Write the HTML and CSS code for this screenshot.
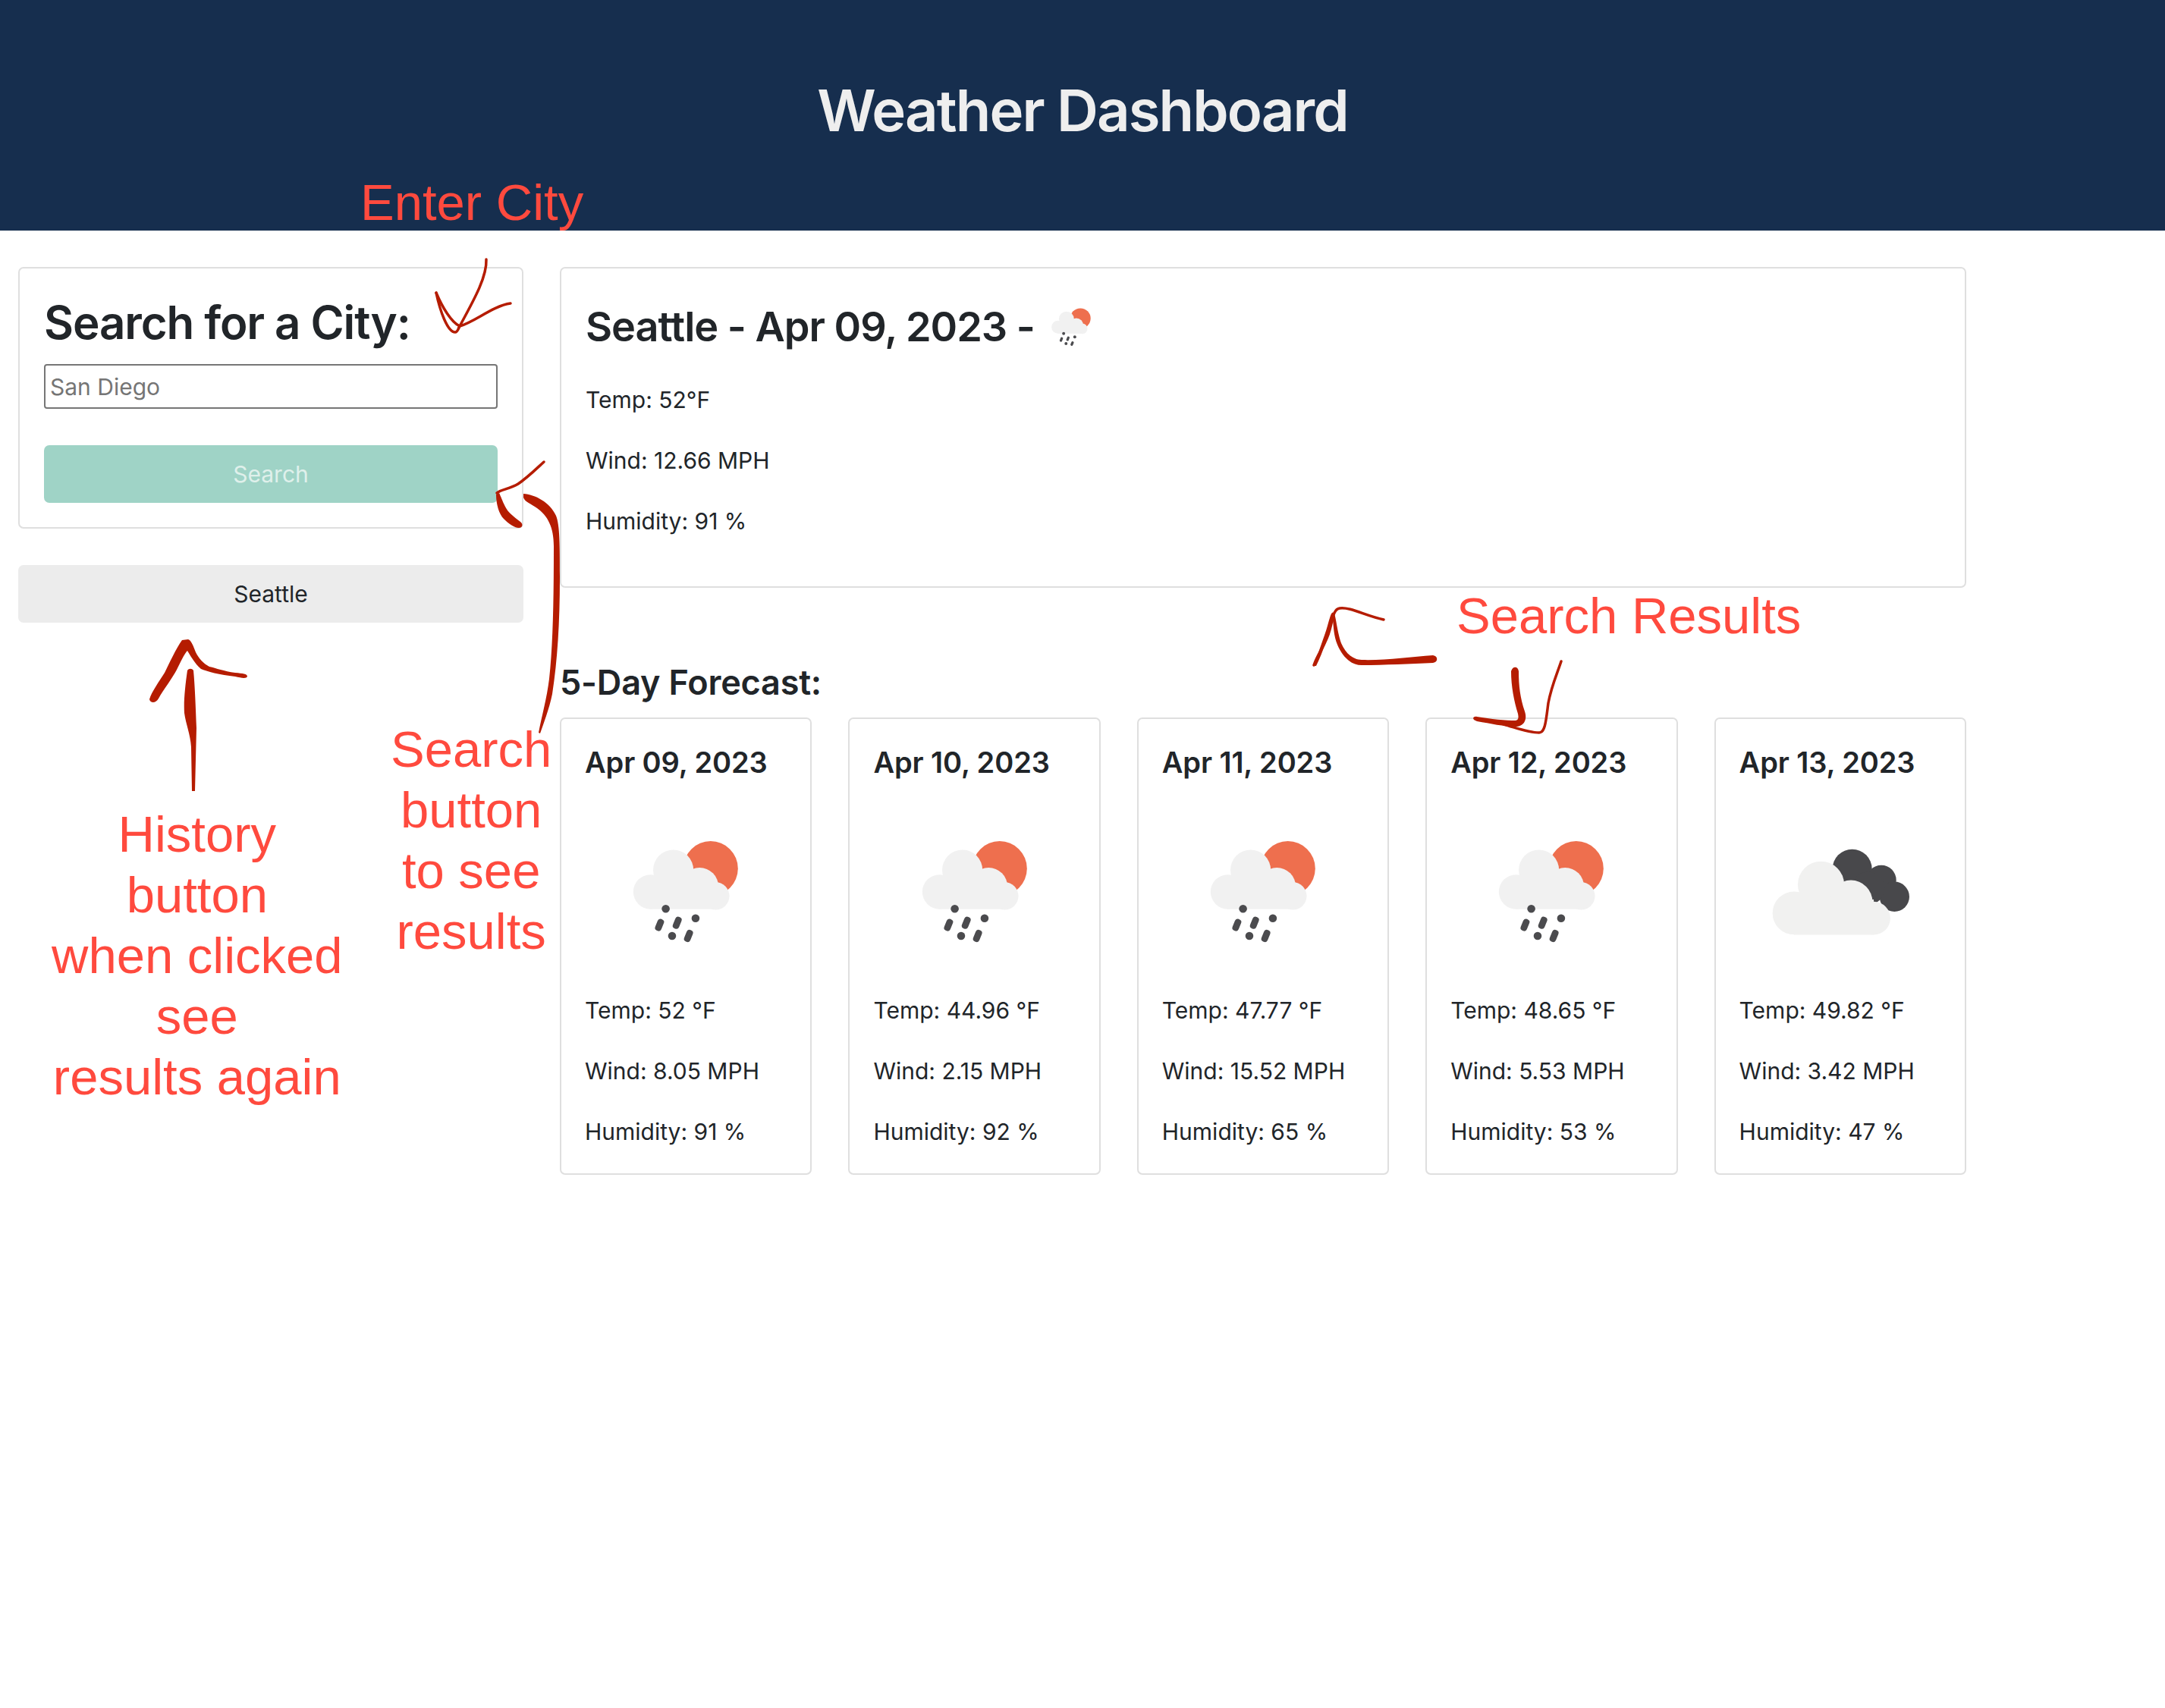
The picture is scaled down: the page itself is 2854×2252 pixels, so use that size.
FILE: index.html
```html
<!DOCTYPE html>
<html lang="en">
<head>
  <meta charset="UTF-8">
  <title>Weather Dashboard</title>
  <link rel="stylesheet" href="styles.css">
</head>
<body>
  <svg class="icon-defs" width="0" height="0">
    <symbol id="rain-icon" viewBox="0 0 100 100">
      <circle cx="68" cy="33.6" r="19.8" fill="#ee6f4e"/>
      <g fill="#f1f1f1">
        <circle cx="24.5" cy="50.5" r="12.5"/>
        <circle cx="41" cy="34.7" r="14.6"/>
        <circle cx="60" cy="46.7" r="13.7"/>
        <circle cx="71.6" cy="53.5" r="10"/>
        <rect x="24.5" y="44" width="47.1" height="19"/>
      </g>
      <g fill="#4b4b4e">
        <circle cx="35.5" cy="62.8" r="2.9"/>
        <circle cx="57.1" cy="69.6" r="2.9"/>
        <circle cx="40.1" cy="82.4" r="2.9"/>
        <rect x="28.6" y="70" width="4.8" height="9" rx="2.2" transform="rotate(22 31 74.5)"/>
        <rect x="41.4" y="68.4" width="4.8" height="9" rx="2.2" transform="rotate(22 43.8 72.9)"/>
        <rect x="49.6" y="77.9" width="4.8" height="9" rx="2.2" transform="rotate(22 52 82.4)"/>
      </g>
    </symbol>
    <symbol id="cloud-icon" viewBox="0 0 100 100">
      <g fill="#48484b">
        <circle cx="58.6" cy="33.9" r="14.3"/>
        <circle cx="79.7" cy="42" r="10.8"/>
        <circle cx="89.2" cy="54" r="10.8"/>
        <circle cx="70" cy="48" r="12"/>
      </g>
      <g fill="#f1f1f0">
        <circle cx="16.5" cy="65.9" r="15.6"/>
        <circle cx="36" cy="45.2" r="16.8"/>
        <circle cx="57.7" cy="57.7" r="15.6"/>
        <circle cx="74.2" cy="69.6" r="12"/>
        <rect x="16.5" y="56" width="57.7" height="25.6"/>
      </g>
    </symbol>
  </svg>

  <header class="page-header">
    <h1>Weather Dashboard</h1>
  </header>

  <main class="layout">
    <aside class="sidebar">
      <form class="panel search-panel">
        <h2 class="panel-title">Search for a City:</h2>
        <input class="city-input" type="text" placeholder="San Diego">
        <button class="btn btn-search" type="button">Search</button>
      </form>
      <button class="btn btn-history" type="button">Seattle</button>
    </aside>

    <section class="results">
      <div class="panel current">
        <h2 class="current-title">Seattle - Apr 09, 2023 -
          <svg class="current-icon"><use href="#rain-icon"/></svg>
        </h2>
        <p>Temp: 52°F</p>
        <p>Wind: 12.66 MPH</p>
        <p>Humidity: 91 %</p>
      </div>

      <h3 class="forecast-title">5-Day Forecast:</h3>
      <div class="forecast">
        <article class="panel day">
          <h4>Apr 09, 2023</h4>
          <svg class="day-icon"><use href="#rain-icon"/></svg>
          <p>Temp: 52 °F</p>
          <p>Wind: 8.05 MPH</p>
          <p>Humidity: 91 %</p>
        </article>
        <article class="panel day">
          <h4>Apr 10, 2023</h4>
          <svg class="day-icon"><use href="#rain-icon"/></svg>
          <p>Temp: 44.96 °F</p>
          <p>Wind: 2.15 MPH</p>
          <p>Humidity: 92 %</p>
        </article>
        <article class="panel day">
          <h4>Apr 11, 2023</h4>
          <svg class="day-icon"><use href="#rain-icon"/></svg>
          <p>Temp: 47.77 °F</p>
          <p>Wind: 15.52 MPH</p>
          <p>Humidity: 65 %</p>
        </article>
        <article class="panel day">
          <h4>Apr 12, 2023</h4>
          <svg class="day-icon"><use href="#rain-icon"/></svg>
          <p>Temp: 48.65 °F</p>
          <p>Wind: 5.53 MPH</p>
          <p>Humidity: 53 %</p>
        </article>
        <article class="panel day">
          <h4>Apr 13, 2023</h4>
          <svg class="day-icon"><use href="#cloud-icon"/></svg>
          <p>Temp: 49.82 °F</p>
          <p>Wind: 3.42 MPH</p>
          <p>Humidity: 47 %</p>
        </article>
      </div>
    </section>
  </main>

  <!-- hand drawn notes on top of the page -->
  <div class="note note-enter">Enter City</div>
  <div class="note note-results">Search Results</div>
  <div class="note note-search">Search<br>button<br>to see<br>results</div>
  <div class="note note-history">History<br>button<br>when clicked<br>see<br>results again</div>

  <svg class="scribbles" width="2854" height="2252" viewBox="0 0 2854 2252">
    <g class="thin">
      <path d="M641 342C642 365 625 395 606 430C625 425 650 403 673 400"/>
      <path d="M575 386C580 410 590 438 600 438C603 438 604 434 606 430"/>
      <path d="M575 386C583 405 595 425 606 430"/>
      <path d="M717 609C705 620 695 630 683 638C672 645 660 645 655 650"/>
      <path d="M1824 817C1800 812 1780 800 1766 802C1758 803 1757 815 1753 830C1748 850 1738 860 1732 877"/>
      <path d="M1982 955C2000 960 2015 966 2029 966C2037 966 2038 950 2041 927C2045 905 2052 890 2058 872"/>
    </g>
    <g class="thick">
      <path d="M654 652C654 665 658 678 664 684C670 690 678 696 684 696C689 696 690 691 686 688C676 680 670 676 666 668C662 660 660 654 658 650Z"/>
      <path d="M690 651C705 652 725 662 733 680C738 692 738 720 738 760C738 820 735 870 728 915C724 935 716 955 712 967L710 966C714 945 721 920 724 895C729 850 730 790 730 720C730 695 722 680 708 670C700 664 692 662 690 656Z"/>
      <path d="M240 844C232 855 223 875 217 887C210 898 200 912 197 922C198 927 205 928 209 921C215 910 228 893 233 883C238 873 243 862 247 858C253 868 258 876 265 882C272 885 290 890 310 892C318 894 325 895 326 892C326 888 320 888 310 887C295 885 285 881 276 879C268 875 262 868 258 860C255 852 252 844 248 843Z"/>
      <path d="M247 884C244 905 242 925 243 940C245 955 251 968 252 985L253 1043H257L259 960C258 935 257 905 255 884C253 881 249 881 247 884Z"/>
      <path d="M1733 878C1737 860 1746 840 1750 825C1753 815 1755 805 1758 808C1761 810 1762 830 1768 848C1774 862 1784 870 1795 870C1825 871 1860 866 1889 864C1896 865 1896 873 1889 874C1860 875 1825 877 1795 877C1782 877 1770 867 1763 850C1758 838 1758 825 1757 818C1752 835 1744 860 1735 878Z"/>
      <path d="M1992 885C1994 878 2001 878 2002 885C2002 905 2004 920 2010 938C2014 950 2008 958 1998 958C1982 958 1965 954 1947 951C1940 949 1941 944 1947 945C1965 948 1985 950 1998 950C2002 949 2002 946 2001 941C1996 925 1992 905 1992 885Z"/>
    </g>
  </svg>
</body>
</html>
```

FILE: styles.css
```css
* {
  box-sizing: border-box;
}

body {
  margin: 0;
  width: 2854px;
  min-height: 2252px;
  position: relative;
  overflow: hidden;
  background: #fff;
  color: #212529;
  font-family: Inter, "Noto Sans", sans-serif;
  font-size: 30px;
  line-height: 44px;
}

.icon-defs {
  position: absolute;
}

.page-header {
  height: 304px;
  padding-top: 95px;
  background: #162e4e;
  text-align: center;
}

.page-header h1 {
  margin: 0;
  color: #eeeeee;
  font-size: 76px;
  font-weight: 600;
  letter-spacing: -1.9px;
  line-height: 100px;
}

.layout {
  display: grid;
  grid-template-columns: 666px 1854px;
  gap: 48px;
  padding: 48px 24px;
}

.panel {
  border: 2px solid #dfdfdf;
  border-radius: 7px;
  background: #fff;
}

.search-panel {
  display: flex;
  flex-direction: column;
  height: 345px;
  padding: 32px 32px 0;
}

.panel-title {
  margin: 0 0 16px;
  font-size: 60px;
  font-weight: 600;
  letter-spacing: -1.1px;
  line-height: 78px;
}

.city-input {
  height: 59px;
  padding: 0 6px;
  border: 2px solid #767676;
  border-radius: 4px;
  background: #fff;
  font: inherit;
}

.city-input::placeholder {
  color: #757575;
  opacity: 1;
}

.btn {
  display: block;
  width: 100%;
  height: 76px;
  border: 0;
  border-radius: 7px;
  font: inherit;
}

.btn-search {
  margin-top: 48px;
  background: #9fd3c6;
  color: #dff0eb;
}

.btn-history {
  margin-top: 48px;
  background: #ececec;
  color: #212529;
}

.current {
  height: 423px;
  padding: 38px 32px 0;
}

.current-title {
  display: flex;
  align-items: center;
  gap: 14px;
  height: 78px;
  margin: 0 0 35px;
  font-size: 54px;
  font-weight: 600;
  letter-spacing: -1px;
  line-height: 78px;
}

.current-icon {
  width: 68px;
  height: 68px;
}

.current p,
.day p {
  margin: 0 0 36px;
}

.forecast-title {
  margin: 90px 0 11px;
  font-size: 45px;
  font-weight: 600;
  letter-spacing: -0.2px;
  line-height: 70px;
}

.forecast {
  display: grid;
  grid-template-columns: repeat(5, 1fr);
  gap: 48px;
}

.day {
  height: 603px;
  padding: 32px 31px 0;
}

.day h4 {
  margin: 0;
  font-size: 38px;
  font-weight: 600;
  letter-spacing: -0.1px;
  line-height: 50px;
}

.day-icon {
  display: block;
  width: 182px;
  height: 182px;
  margin: 54px auto 44px;
}

.note {
  position: absolute;
  color: #ff4a3e;
  font-family: "Liberation Sans", Arial, sans-serif;
  font-size: 67px;
  line-height: 80px;
  text-align: center;
  white-space: nowrap;
}

.note-enter {
  left: 475px;
  top: 227px;
}

.note-results {
  left: 1920px;
  top: 772px;
}

.note-search {
  left: 515px;
  top: 948px;
}

.note-history {
  left: 68px;
  top: 1060px;
}

.scribbles {
  position: absolute;
  left: 0;
  top: 0;
  pointer-events: none;
}

.thin {
  fill: none;
  stroke: #b51c00;
  stroke-width: 3.5;
  stroke-linecap: round;
}

.thick {
  fill: #b51c00;
}
```
